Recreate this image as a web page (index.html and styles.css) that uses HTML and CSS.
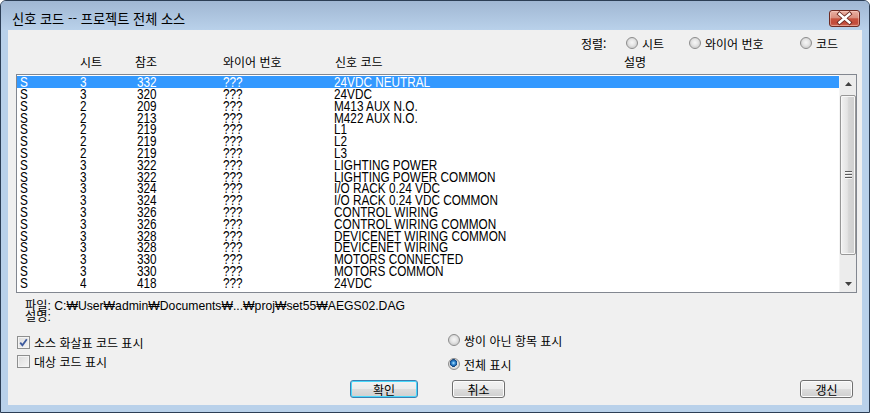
FILE: index.html
```html
<!DOCTYPE html>
<html lang="ko">
<head>
<meta charset="utf-8">
<title>신호 코드</title>
<link rel="stylesheet" href="styles.css">
</head>
<body>
<div class="window">
  <div class="titlebar">
    <span class="title">신호 코드 -- 프로젝트 전체 소스</span>
    <button class="close" aria-label="닫기">
      <svg width="31" height="17" viewBox="0 0 31 17">
        <path d="M10.5 4 L20.5 12.5 M20.5 4 L10.5 12.5" stroke="#6a2a22" stroke-width="4.2" stroke-linecap="square"/>
        <path d="M10.5 4 L20.5 12.5 M20.5 4 L10.5 12.5" stroke="#ffffff" stroke-width="2.4" stroke-linecap="square"/>
      </svg>
    </button>
  </div>
  <div class="client">
    <div class="sortbar">
      <span class="sort-label">정렬:</span>
      <label class="opt w63"><span class="radio"></span>시트</label>
      <label class="opt w111"><span class="radio"></span>와이어 번호</label>
      <label class="opt"><span class="radio"></span>코드</label>
    </div>
    <div class="colheads">
      <span>시트</span><span>참조</span><span>와이어 번호</span><span>신호 코드</span><span>설명</span>
    </div>
    <div class="listbox">
      <div class="rows">
        <div class="row sel"><span>S</span><span>3</span><span>332</span><span>???</span><span>24VDC NEUTRAL</span></div>
        <div class="row"><span>S</span><span>3</span><span>320</span><span>???</span><span>24VDC</span></div>
        <div class="row"><span>S</span><span>2</span><span>209</span><span>???</span><span>M413 AUX N.O.</span></div>
        <div class="row"><span>S</span><span>2</span><span>213</span><span>???</span><span>M422 AUX N.O.</span></div>
        <div class="row"><span>S</span><span>2</span><span>219</span><span>???</span><span>L1</span></div>
        <div class="row"><span>S</span><span>2</span><span>219</span><span>???</span><span>L2</span></div>
        <div class="row"><span>S</span><span>2</span><span>219</span><span>???</span><span>L3</span></div>
        <div class="row"><span>S</span><span>3</span><span>322</span><span>???</span><span>LIGHTING POWER</span></div>
        <div class="row"><span>S</span><span>3</span><span>322</span><span>???</span><span>LIGHTING POWER COMMON</span></div>
        <div class="row"><span>S</span><span>3</span><span>324</span><span>???</span><span>I/O RACK 0.24 VDC</span></div>
        <div class="row"><span>S</span><span>3</span><span>324</span><span>???</span><span>I/O RACK 0.24 VDC COMMON</span></div>
        <div class="row"><span>S</span><span>3</span><span>326</span><span>???</span><span>CONTROL WIRING</span></div>
        <div class="row"><span>S</span><span>3</span><span>326</span><span>???</span><span>CONTROL WIRING COMMON</span></div>
        <div class="row"><span>S</span><span>3</span><span>328</span><span>???</span><span>DEVICENET WIRING COMMON</span></div>
        <div class="row"><span>S</span><span>3</span><span>328</span><span>???</span><span>DEVICENET WIRING</span></div>
        <div class="row"><span>S</span><span>3</span><span>330</span><span>???</span><span>MOTORS CONNECTED</span></div>
        <div class="row"><span>S</span><span>3</span><span>330</span><span>???</span><span>MOTORS COMMON</span></div>
        <div class="row"><span>S</span><span>4</span><span>418</span><span>???</span><span>24VDC</span></div>
      </div>
      <div class="vscroll">
        <div class="arrow"><svg width="7" height="4" viewBox="0 0 7 4"><path d="M0 4 L3.5 0 L7 4 Z" fill="#404040"/></svg></div>
        <div class="thumb"><div class="grip"><i></i><i></i><i></i></div></div>
        <div class="track"></div>
        <div class="arrow"><svg width="7" height="4" viewBox="0 0 7 4"><path d="M0 0 L7 0 L3.5 4 Z" fill="#404040"/></svg></div>
      </div>
    </div>
    <div class="info">
      <div>파일: C:₩User₩admin₩Documents₩...₩proj₩set55₩AEGS02.DAG</div>
      <div>설명:</div>
    </div>
    <div class="options">
      <div class="checks">
        <label class="chk"><span class="checkbox"><svg width="11" height="11" viewBox="0 0 11 11"><path d="M2.2 5.6 L4.4 8.2 L8.8 2.2" fill="none" stroke="#3d5a9e" stroke-width="1.8"/></svg></span>소스 화살표 코드 표시</label>
        <label class="chk"><span class="checkbox"></span>대상 코드 표시</label>
      </div>
      <div class="radios">
        <label class="opt"><span class="radio"></span>쌍이 아닌 항목 표시</label>
        <label class="opt"><span class="radio checked"></span>전체 표시</label>
      </div>
    </div>
    <div class="buttons">
      <button class="btn default">확인</button>
      <button class="btn">취소</button>
      <button class="btn refresh">갱신</button>
    </div>
  </div>
</div>
</body>
</html>
```
FILE: styles.css
```css
html, body {
  margin: 0;
  padding: 0;
  background: #ffffff;
}
body {
  font-family: "Noto Sans CJK KR", sans-serif;
  font-size: 12px;
  color: #000;
}
.window {
  width: 870px;
  height: 413px;
  box-sizing: border-box;
  border: 1px solid #2c3e55;
  border-radius: 6px 6px 0 0;
  background: #b9d1ea;
  display: flex;
  flex-direction: column;
  overflow: hidden;
}
.titlebar {
  height: 29px;
  flex: none;
  display: flex;
  align-items: flex-start;
  padding: 0 9px 0 11px;
  background: linear-gradient(#a0b7d3, #b9d1ea);
}
.title {
  font-size: 13.2px;
  line-height: 18px;
  margin-top: 9px;
  color: #000;
}
.close {
  margin-left: auto;
  margin-top: 9px;
  width: 31px;
  height: 17px;
  padding: 0;
  border: 1px solid #6e2b23;
  border-radius: 3px;
  background: linear-gradient(#eab1a3 0%, #d98e7e 45%, #c8543f 52%, #c24a3a 80%, #d06a55 100%);
  box-shadow: inset 0 0 0 1px rgba(255, 220, 210, 0.45);
  display: flex;
  align-items: center;
  justify-content: center;
  box-sizing: border-box;
}
.close svg {
  display: block;
  margin: -1px;
}
.client {
  margin: 0 7px;
  height: 375px;
  flex: none;
  background: #f0f0f0;
  display: flex;
  flex-direction: column;
}
.sortbar {
  height: 22px;
  margin-top: 2px;
  display: flex;
  align-items: center;
  padding-left: 573px;
}
.sort-label {
  width: 45px;
}
.opt {
  display: flex;
  align-items: center;
  gap: 4px;
  white-space: nowrap;
}
.w63 { width: 63px; }
.w111 { width: 111px; }
.radio {
  width: 12px;
  height: 12px;
  flex: none;
  box-sizing: border-box;
  border-radius: 50%;
  border: 1px solid #8c8c8c;
  background: radial-gradient(circle at 50% 45%, #f6f6f6 0, #e6e6e6 3px, #d2d2d2 5px, #ececec 6px);
}
.radio.checked {
  background:
    radial-gradient(circle at 45% 40%, #bfe6ff 0, #3f97dc 1.5px, #17589f 3px, #0f3f78 3.6px, rgba(0,0,0,0) 4px),
    radial-gradient(circle at 50% 50%, #f6f6f6 0, #d8d8d8 5px, #ececec 6px);
}
.colheads {
  height: 16px;
  display: grid;
  grid-template-columns: 55px 88px 112px 289px 1fr;
  padding-left: 72px;
  align-items: center;
  line-height: 16px;
}
.listbox {
  margin: 4px 5px 0 8px;
  height: 219px;
  flex: none;
  box-sizing: border-box;
  border: 1px solid #828790;
  background: #ffffff;
  display: flex;
}
.rows {
  flex: 1;
  padding-top: 1px;
  font-family: "Liberation Sans", sans-serif;
  font-size: 14px;
  overflow: hidden;
}
.row {
  display: grid;
  grid-template-columns: 60px 57px 86px 111px 1fr;
  height: 11.8px;
  line-height: 12px;
  padding-left: 3px;
  white-space: nowrap;
}
.row span {
  display: block;
  transform: scaleX(0.84);
  transform-origin: 0 50%;
}
.row.sel {
  background: #3399ff;
  color: #ffffff;
  height: 12px;
}
.vscroll {
  width: 17px;
  flex: none;
  background: #ececec;
  border-left: 1px solid #f4f4f4;
  box-sizing: border-box;
  display: flex;
  flex-direction: column;
}
.arrow {
  height: 17px;
  display: flex;
  align-items: center;
  justify-content: center;
  flex: none;
}
.arrow svg { display: block; }
.thumb {
  margin: 3px 0 0 0;
  height: 160px;
  flex: none;
  box-sizing: border-box;
  border: 1px solid #979797;
  border-radius: 2px;
  background: linear-gradient(to right, #f2f2f2 0%, #e3e3e3 45%, #d6d6d6 55%, #cfcfcf 100%);
  box-shadow: inset 0 0 0 1px #f7f7f7;
  display: flex;
  align-items: center;
  justify-content: center;
}
.grip {
  display: flex;
  flex-direction: column;
  gap: 1px;
}
.grip i {
  display: block;
  width: 7px;
  height: 1px;
  background: #5c5c5c;
  border-bottom: 1px solid #f7f7f7;
}
.track { flex: 1; }
.info {
  margin-top: 8px;
  padding-left: 17px;
  font-family: "Liberation Sans", "Noto Sans CJK KR", sans-serif;
  font-size: 12.2px;
  line-height: 11px;
  white-space: nowrap;
}
.options {
  display: flex;
  padding-left: 9px;
}
.checks {
  width: 431px;
  display: flex;
  flex-direction: column;
  gap: 6px;
  padding-top: 13px;
}
.chk {
  display: flex;
  align-items: center;
  gap: 4px;
  height: 13px;
  white-space: nowrap;
}
.checkbox {
  width: 13px;
  height: 13px;
  flex: none;
  box-sizing: border-box;
  border: 1px solid #8e8f8f;
  background: linear-gradient(135deg, #dcdcdc, #f6f6f6);
  box-shadow: inset 0 0 0 1px #f4f4f4;
  display: flex;
  align-items: center;
  justify-content: center;
}
.checkbox svg { display: block; }
.radios {
  display: flex;
  flex-direction: column;
  gap: 12px;
  padding-top: 11px;
}
.radios .opt { height: 12px; }
.buttons {
  display: flex;
  margin-top: 10px;
  height: 18px;
  padding: 0 9px 0 342px;
}
.btn {
  width: 53px;
  height: 18px;
  padding: 0;
  box-sizing: border-box;
  border: 1px solid #707070;
  border-radius: 3px;
  background: linear-gradient(#f2f2f2 0%, #ebebeb 50%, #dddddd 51%, #cfcfcf 100%);
  box-shadow: inset 0 0 0 1px #fcfcfc;
  font-family: "Noto Sans CJK KR", sans-serif;
  font-size: 12px;
  line-height: 15px;
  color: #000;
}
.btn.default {
  width: 68px;
  margin-right: 34px;
  border-color: #3c7fb1;
  box-shadow: inset 0 0 0 1px #48d8fb;
}
.btn.refresh {
  margin-left: auto;
}
```
